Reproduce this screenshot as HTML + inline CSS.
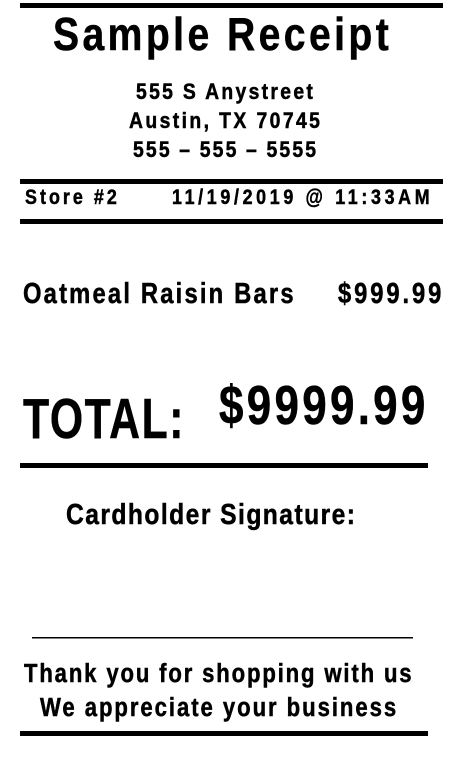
<!DOCTYPE html>
<html><head><meta charset="utf-8"><style>
html,body{margin:0;padding:0;background:#fff;width:452px;height:762px;overflow:hidden}
svg{display:block}
text{font-family:"Liberation Sans",sans-serif;font-weight:bold;fill:#000;stroke:#000;stroke-width:0.5}
</style></head><body>
<svg width="452" height="762" viewBox="0 0 452 762" xmlns="http://www.w3.org/2000/svg">
<rect x="20" y="3" width="423" height="5" fill="#000"/>
<g transform="translate(53,50) scale(0.85,1)"><text font-size="46" textLength="395" lengthAdjust="spacing">Sample Receipt</text></g>
<g transform="translate(136,99) scale(0.88,1)"><text font-size="22" textLength="201" lengthAdjust="spacing">555 S Anystreet</text></g>
<g transform="translate(129,128) scale(0.88,1)"><text font-size="22" textLength="217" lengthAdjust="spacing">Austin, TX 70745</text></g>
<g transform="translate(133,157) scale(0.88,1)"><text font-size="22" textLength="208" lengthAdjust="spacing">555 – 555 – 5555</text></g>
<rect x="20" y="179" width="423" height="5" fill="#000"/>
<g transform="translate(25,204) scale(0.85,1)"><text font-size="21" textLength="108" lengthAdjust="spacing">Store #2</text></g>
<g transform="translate(172,204) scale(0.85,1)"><text font-size="21" textLength="303" lengthAdjust="spacing">11/19/2019 @ 11:33AM</text></g>
<rect x="20" y="219" width="423" height="5" fill="#000"/>
<g transform="translate(23,303) scale(0.82,1)"><text font-size="29" textLength="330" lengthAdjust="spacing">Oatmeal Raisin Bars</text></g>
<g transform="translate(338,303) scale(0.82,1)"><text font-size="29" textLength="126" lengthAdjust="spacing">$999.99</text></g>
<g transform="translate(23,438) scale(0.75,1)"><text font-size="57" textLength="214" lengthAdjust="spacing">TOTAL:</text></g>
<g transform="translate(219,424) scale(0.8,1)"><text font-size="55" textLength="258" lengthAdjust="spacing">$9999.99</text></g>
<rect x="20" y="463" width="408" height="5" fill="#000"/>
<g transform="translate(66,524) scale(0.85,1)"><text font-size="29" textLength="340" lengthAdjust="spacing">Cardholder Signature:</text></g>
<rect x="32" y="637" width="381" height="1.5" fill="#000"/>
<g transform="translate(24,682) scale(0.85,1)"><text font-size="26" textLength="456" lengthAdjust="spacing">Thank you for shopping with us</text></g>
<g transform="translate(40,716) scale(0.85,1)"><text font-size="26" textLength="419" lengthAdjust="spacing">We appreciate your business</text></g>
<rect x="20" y="731" width="408" height="5" fill="#000"/>
</svg>
</body></html>
